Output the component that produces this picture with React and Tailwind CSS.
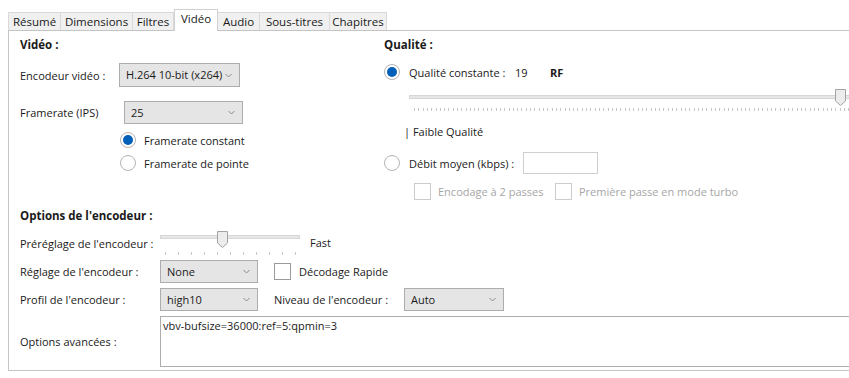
import React from 'react';

const tabs = [
    { label: 'Résumé', w: 53 },
    { label: 'Dimensions', w: 72 },
    { label: 'Filtres', w: 41 },
    { label: 'Vidéo', w: 44, active: true },
    { label: 'Audio', w: 42 },
    { label: 'Sous-titres', w: 70 },
    { label: 'Chapitres', w: 57 },
];

function Radio({ checked }) {
    return (
        <span className="w-4 h-4 shrink-0 rounded-full border border-[#b4b4b4] bg-white flex items-center justify-center">
            {checked && <span className="w-[10px] h-[10px] rounded-full bg-[#005fb8]" />}
        </span>
    );
}

function Checkbox({ disabled }) {
    return (
        <span className={`block w-[17px] h-[17px] shrink-0 bg-white border ${disabled ? 'border-[#cccccc]' : 'border-[#9a9a9a]'}`} />
    );
}

function Chevron() {
    return (
        <svg width="7" height="5" viewBox="0 0 7 5" className="shrink-0">
            <polyline points="0.5,1 3.5,4 6.5,1" fill="none" stroke="#8a8a8a" strokeWidth="1" />
        </svg>
    );
}

function Select({ value, w, h = 23 }) {
    return (
        <div
            className="flex items-center border border-[#adadad] bg-[#e5e5e5] pl-[6px] pr-[7px] shrink-0"
            style={{ width: w, height: h }}
        >
            <span className="flex-1 whitespace-nowrap leading-[16px]">{value}</span>
            <Chevron />
        </div>
    );
}

function Thumb() {
    return (
        <path d="M0.5 0.5 H10.5 V12 L5.5 16.5 L0.5 12 Z" fill="#ececec" stroke="#a3a3a3" strokeWidth="1" />
    );
}

function QualitySlider() {
    const ticks = [];
    for (let x = 5; x < 440; x += 4.3) ticks.push(x);
    return (
        <svg width="440" height="25" className="block">
            <rect x="0.5" y="7.5" width="445" height="3" fill="#e7e7e7" stroke="#d6d6d6" />
            {ticks.map((x, i) => (
                <line key={i} x1={Math.round(x) + 0.5} x2={Math.round(x) + 0.5} y1="20" y2="23" stroke="#c8c8c8" />
            ))}
            <g transform="translate(426,1)">
                <Thumb />
            </g>
        </svg>
    );
}

function PresetSlider() {
    const ticks = [];
    for (let i = 0; i <= 10; i++) ticks.push(5 + i * 13);
    return (
        <svg width="140" height="28" className="block shrink-0">
            <rect x="0.5" y="6.5" width="139" height="3" fill="#e7e7e7" stroke="#d6d6d6" />
            {ticks.map((x, i) => (
                <line key={i} x1={x + 0.5} x2={x + 0.5} y1="23" y2="26" stroke="#c8c8c8" />
            ))}
            <g transform="translate(57,2)">
                <Thumb />
            </g>
        </svg>
    );
}

export default function App() {
    return (
        <div className="w-[849px] h-[378px] bg-white overflow-hidden text-[11px] text-[#1a1a1a] font-['Open_Sans','Noto_Sans',sans-serif] leading-none">
            {/* onglets */}
            <div className="flex items-end h-[30px] pl-[8px]">
                {tabs.map((t, i) => (
                    <div
                        key={t.label}
                        style={{ width: t.w }}
                        className={
                            t.active
                                ? 'h-[22px] -mb-px relative z-10 bg-white border border-b-0 border-[#d0d0d0] flex items-center justify-center pb-[3px] text-[11.5px]'
                                : `h-[18px] bg-[#f0f0f0] border-t border-r border-[#d9d9d9] ${i === 0 ? 'border-l' : ''} flex items-center justify-center text-[11.5px]`
                        }
                    >
                        {t.label}
                    </div>
                ))}
            </div>

            {/* panneau */}
            <div className="ml-[8px] border-l border-t border-b border-[#c4c4c4] pl-[11px] pt-[6px] pb-[3px]">
                <div className="flex h-[171px]">
                    {/* colonne gauche */}
                    <div className="w-[364px] shrink-0 flex flex-col">
                        <div className="h-4 flex items-center font-bold text-[11.5px]">Vidéo :</div>
                        <div className="mt-[10px] flex items-center">
                            <span className="w-[99px] shrink-0">Encodeur vidéo :</span>
                            <Select value="H.264 10-bit (x264)" w={121} h={24} />
                        </div>
                        <div className="mt-[14px] flex items-center">
                            <span className="w-[104px] shrink-0">Framerate (IPS)</span>
                            <Select value="25" w={119} />
                        </div>
                        <div className="mt-[8px] ml-[100px] flex items-center gap-2 h-4">
                            <Radio checked />
                            <span>Framerate constant</span>
                        </div>
                        <div className="mt-[7px] ml-[100px] flex items-center gap-2 h-4">
                            <Radio />
                            <span>Framerate de pointe</span>
                        </div>
                    </div>

                    {/* colonne droite */}
                    <div className="flex-1 flex flex-col">
                        <div className="h-4 flex items-center font-bold text-[11.5px]">Qualité :</div>
                        <div className="mt-[11px] flex items-center h-4">
                            <Radio checked />
                            <span className="ml-[9px] w-[106px] shrink-0">Qualité constante :</span>
                            <span className="w-[35px] shrink-0">19</span>
                            <span className="font-bold">RF</span>
                        </div>
                        <div className="mt-[8px] ml-[25px]">
                            <QualitySlider />
                        </div>
                        <div className="mt-[10px] ml-[20px] h-4 flex items-center">| Faible Qualité</div>
                        <div className="mt-[13px] flex items-center h-[22px]">
                            <Radio />
                            <span className="ml-[9px] w-[114px] shrink-0">Débit moyen (kbps) :</span>
                            <span className="block w-[75px] h-[22px] shrink-0 border border-[#cfcfcf] bg-white" />
                        </div>
                        <div className="mt-[9px] ml-[30px] flex items-center h-[17px] text-[#a6a6a6]">
                            <Checkbox disabled />
                            <span className="ml-[7px] w-[117px] shrink-0">Encodage à 2 passes</span>
                            <Checkbox disabled />
                            <span className="ml-[7px]">Première passe en mode turbo</span>
                        </div>
                    </div>
                </div>

                {/* options de l'encodeur */}
                <div className="h-4 flex items-center font-bold text-[11.5px]">Options de l'encodeur :</div>
                <div className="mt-[5px] flex items-center h-[28px]">
                    <span className="w-[140px] shrink-0">Préréglage de l'encodeur :</span>
                    <PresetSlider />
                    <span className="ml-[10px] -mt-px">Fast</span>
                </div>
                <div className="mt-[3px] flex items-center">
                    <span className="w-[140px] shrink-0">Réglage de l'encodeur :</span>
                    <Select value="None" w={98} />
                    <span className="ml-[16px] shrink-0"><Checkbox /></span>
                    <span className="ml-[8px]">Décodage Rapide</span>
                </div>
                <div className="mt-[5px] flex items-center">
                    <span className="w-[140px] shrink-0">Profil de l'encodeur :</span>
                    <Select value="high10" w={98} />
                    <span className="ml-[16px] w-[130px] shrink-0">Niveau de l'encodeur :</span>
                    <Select value="Auto" w={100} />
                </div>
                <div className="mt-[5px] flex items-center">
                    <span className="w-[140px] shrink-0">Options avancées :</span>
                    <div className="flex-1 h-[51px] border border-[#adadad] border-r-0 bg-white px-[2px] pt-[3px]">
                        vbv-bufsize=36000:ref=5:qpmin=3
                    </div>
                </div>
            </div>
        </div>
    );
}
